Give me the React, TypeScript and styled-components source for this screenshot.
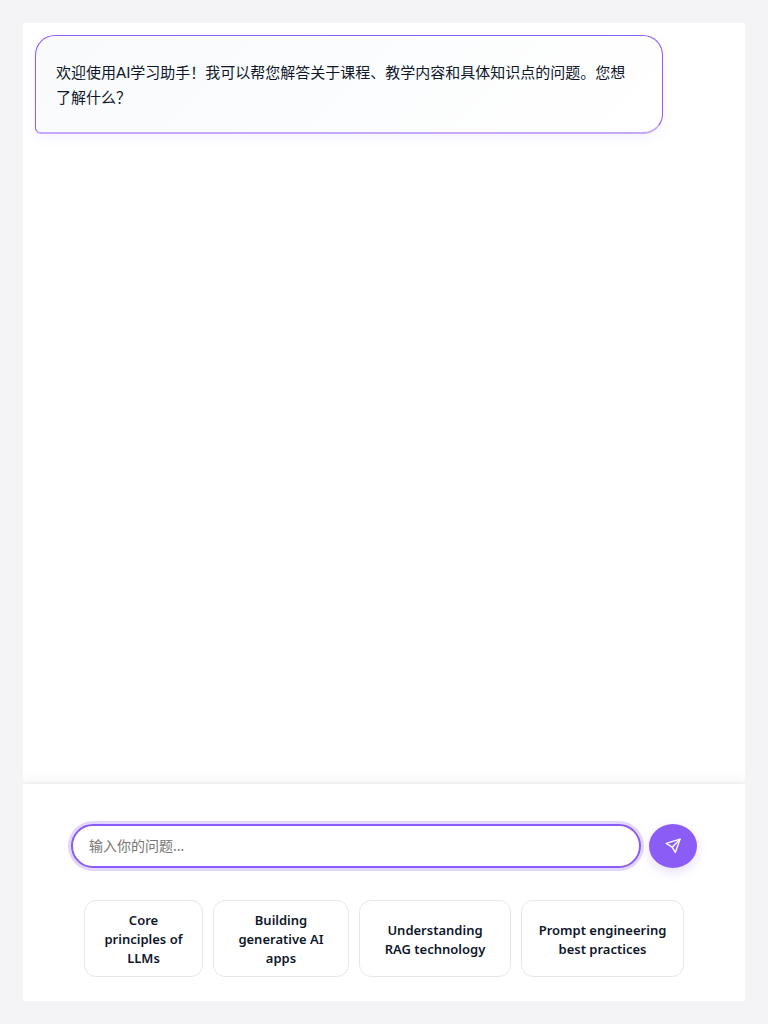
import React, { useState } from 'react';
import styled, { createGlobalStyle } from 'styled-components';

const GlobalStyle = createGlobalStyle`
  *, *::before, *::after { box-sizing: border-box; }
  body {
    margin: 0;
    background: #f4f4f6;
    color: #0f172a;
    font-family: "Noto Sans", "Noto Sans CJK SC", sans-serif;
  }
  button, input { font-family: inherit; }
`;

const Page = styled.div`
  display: flex;
  min-height: 100vh;
  padding: 23px;
`;

const ChatCard = styled.main`
  display: flex;
  flex: 1;
  flex-direction: column;
  min-width: 0;
  background: #ffffff;
  border-radius: 2px;
  overflow: hidden;
`;

const Messages = styled.section`
  flex: 1;
  padding: 12px;
`;

const Bubble = styled.p`
  width: 90%;
  margin: 0;
  padding: 24px 28px 22px 20px;
  border: 1px solid #8b5cf6;
  border-bottom: 2px solid #c4a8fb;
  border-radius: 20px 20px 20px 6px;
  background: linear-gradient(135deg, #f8fafc 0%, #ffffff 100%);
  box-shadow: 0 4px 12px rgba(139, 92, 246, 0.08);
  font-family: Lato, "Noto Sans CJK SC", sans-serif;
  font-size: 15px;
  line-height: 25px;
`;

const Composer = styled.footer`
  display: flex;
  flex-direction: column;
  gap: 32px;
  padding: 40px 48px 24px;
  border-top: 2px solid #f1f1f2;
  box-shadow: 0 -4px 12px rgba(0, 0, 0, 0.04);
`;

const AskForm = styled.form`
  display: flex;
  gap: 8px;
`;

const Question = styled.input`
  flex: 1;
  min-width: 0;
  height: 44px;
  padding: 0 16px 2px;
  border: 2px solid #8b5cf6;
  border-radius: 22px;
  outline: none;
  background: #ffffff;
  box-shadow: 0 0 0 3px rgba(139, 92, 246, 0.25);
  color: #0f172a;
  font-size: 14px;

  &::placeholder {
    color: #757575;
    opacity: 1;
  }
`;

const SendButton = styled.button`
  display: flex;
  align-items: center;
  justify-content: center;
  width: 48px;
  height: 44px;
  padding: 0;
  border: 0;
  border-radius: 50%;
  background: #8b5cf6;
  box-shadow: 0 4px 12px rgba(139, 92, 246, 0.2);
  color: #ffffff;
  cursor: pointer;
`;

const Suggestions = styled.div`
  display: grid;
  grid-template-columns: 119fr 136fr 152fr 163fr;
  gap: 10px;
  width: 100%;
  max-width: 600px;
  margin: 0 auto;
`;

const Suggestion = styled.button`
  min-width: 0;
  min-height: 77px;
  padding: 10px 14px 8px;
  border: 1px solid #e5e7eb;
  border-radius: 12px;
  background: #ffffff;
  color: #0f172a;
  font-size: 13px;
  font-weight: 600;
  line-height: 19px;
  text-align: center;
  cursor: pointer;
`;

const suggestions = [
  'Core principles of LLMs',
  'Building generative AI apps',
  'Understanding RAG technology',
  'Prompt engineering best practices',
];

const SendIcon = () => (
  <svg width="16" height="16" viewBox="0 0 16 16" fill="none" stroke="currentColor" strokeWidth="1.4" strokeLinejoin="round" strokeLinecap="round" aria-hidden="true">
    <path d="M15 1.2 10.3 14.4 7.2 9.2 1.3 5.4Z" />
    <path d="M15 1.2 7.2 9.2" />
  </svg>
);

export default function App() {
  const [question, setQuestion] = useState('');

  return (
    <>
      <GlobalStyle />
      <Page>
        <ChatCard>
          <Messages>
            <Bubble>
              欢迎使用AI学习助手！我可以帮您解答关于课程、教学内容和具体知识点的问题。您想了解什么？
            </Bubble>
          </Messages>
          <Composer>
            <AskForm onSubmit={(event) => event.preventDefault()}>
              <Question
                type="text"
                aria-label="输入你的问题"
                placeholder="输入你的问题..."
                value={question}
                onChange={(event) => setQuestion(event.target.value)}
              />
              <SendButton type="submit" aria-label="发送">
                <SendIcon />
              </SendButton>
            </AskForm>
            <Suggestions>
              {suggestions.map((text) => (
                <Suggestion key={text} type="button" onClick={() => setQuestion(text)}>
                  {text}
                </Suggestion>
              ))}
            </Suggestions>
          </Composer>
        </ChatCard>
      </Page>
    </>
  );
}
